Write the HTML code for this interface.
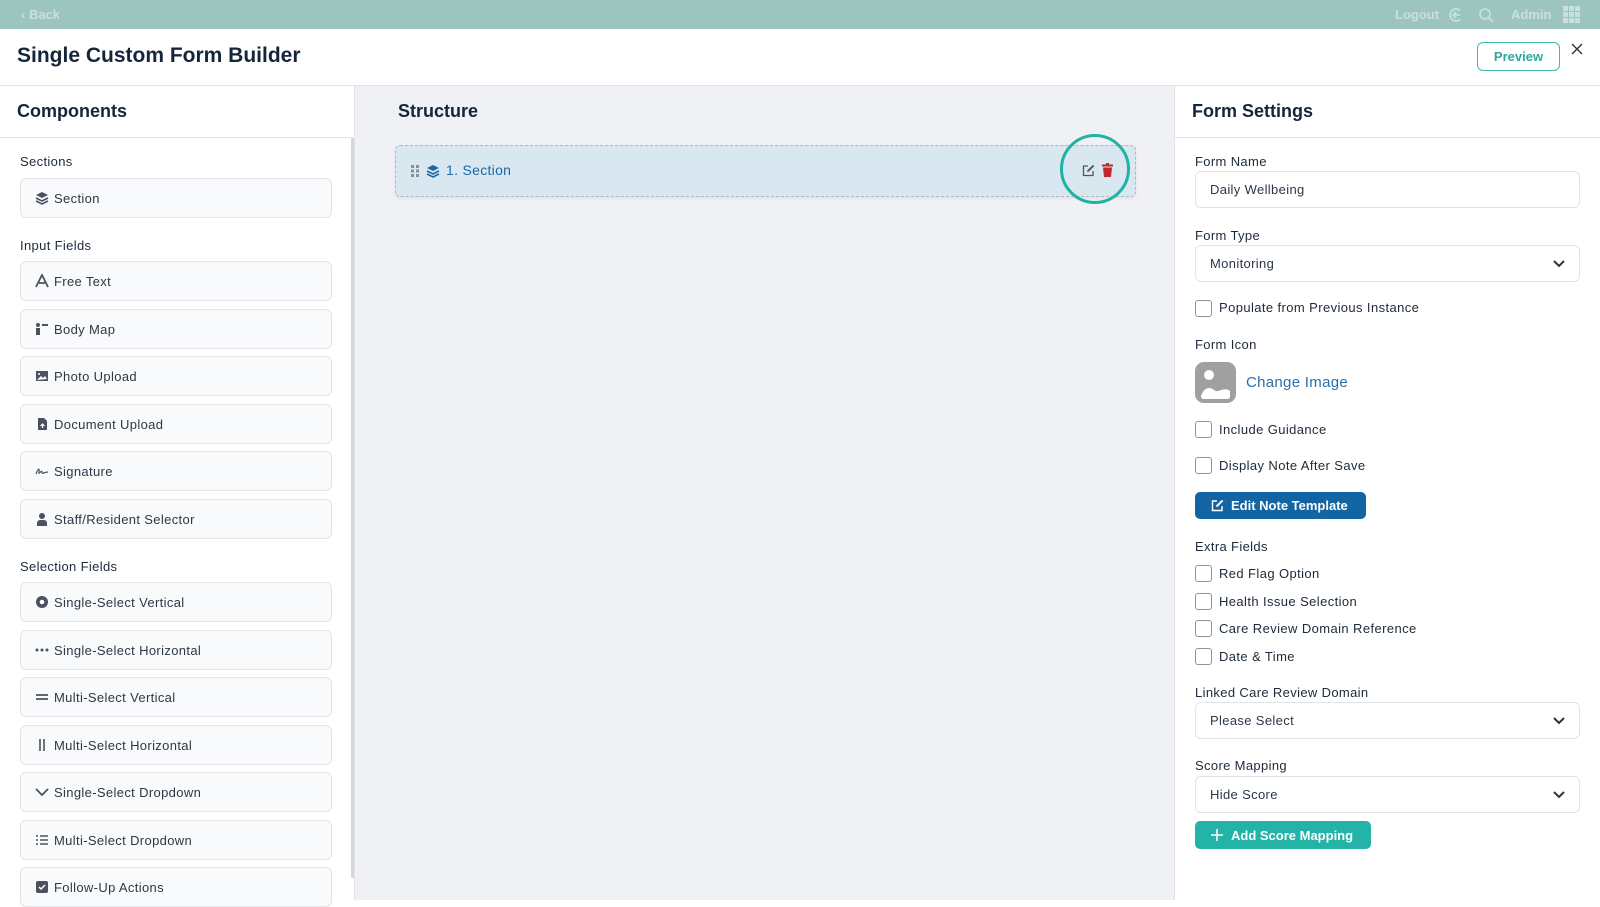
<!DOCTYPE html>
<html><head><meta charset="utf-8"><style>
*{box-sizing:border-box;margin:0;padding:0}
body{width:1600px;height:900px;overflow:hidden;font-family:"Liberation Sans",sans-serif;color:#1d2a3a;background:#fff;position:relative}
.a{position:absolute}
.top{left:0;top:0;width:1600px;height:29px;background:#9dc5c0;color:#c9e0dc;font-size:13px;font-weight:bold}
.hdr{left:0;top:29px;width:1600px;height:57px;border-bottom:1px solid #e2e4e8}
.left{left:0;top:86px;width:353px;height:814px;background:#fff}
.center{left:354px;top:86px;width:821px;height:814px;background:#f0f1f5;border-left:1px solid #e2e4e8;border-right:1px solid #e2e4e8}
.right{left:1175px;top:86px;width:425px;height:814px;background:#fff}
h2{font-size:18px;font-weight:bold;color:#15253a}
.lab{font-size:13px;color:#1d2a3a;letter-spacing:.35px}
.item{left:20px;width:312px;height:40px;border:1px solid #e3e5e8;border-radius:6px;background:#f9fafb;font-size:13px;color:#2c3846;display:flex;align-items:center;padding-left:33px;letter-spacing:.35px}
.item svg{position:absolute;left:14px;top:12px}
.inp{left:1195px;width:385px;height:37px;border:1px solid #e1e3e6;border-radius:6px;font-size:13px;color:#2c3846;padding-left:14px;display:flex;align-items:center;letter-spacing:.35px}
.chev{position:absolute;right:14px;top:13px}
.cb{left:1195px;width:17px;height:17px;border:1.5px solid #8d949c;border-radius:3px;background:#fff}
.cbl{left:1219px;font-size:13px;color:#1d2a3a;letter-spacing:.4px}
</style></head><body>
<div class="a top"><span class="a" style="left:21px;top:7px">‹ Back</span>
<span class="a" style="left:1395px;top:7px">Logout</span>
<svg class="a" style="left:1448px;top:7px" width="16" height="16" viewBox="0 0 16 16"><path d="M12 3.5A6 6 0 1 0 12 12.5" fill="none" stroke="#c9e0dc" stroke-width="1.8"/><path d="M5 8h7M8 5L5 8l3 3" fill="none" stroke="#c9e0dc" stroke-width="1.8"/></svg>
<svg class="a" style="left:1478px;top:7px" width="16" height="16" viewBox="0 0 16 16"><circle cx="7" cy="7" r="5" fill="none" stroke="#c9e0dc" stroke-width="1.6"/><path d="M11 11l4 4" stroke="#c9e0dc" stroke-width="1.6"/></svg>
<span class="a" style="left:1511px;top:7px">Admin</span>
<div class="a" style="left:1563px;top:6px;width:17px;height:17px;display:grid;grid-template-columns:repeat(3,5px);gap:1px">
<i style="background:#c9e0dc"></i><i style="background:#c9e0dc"></i><i style="background:#c9e0dc"></i><i style="background:#c9e0dc"></i><i style="background:#c9e0dc"></i><i style="background:#c9e0dc"></i><i style="background:#c9e0dc"></i><i style="background:#c9e0dc"></i><i style="background:#c9e0dc"></i></div>
</div>
<div class="a hdr">
<div class="a" style="left:17px;top:15px;font-size:21px;font-weight:bold;color:#15253a">Single Custom Form Builder</div>
<div class="a" style="left:1477px;top:13px;width:83px;height:29px;border:1px solid #3fb9ad;border-radius:6px;color:#2aa99c;font-size:13px;font-weight:bold;display:flex;align-items:center;justify-content:center">Preview</div>
<svg class="a" style="left:1571px;top:14px" width="12" height="12" viewBox="0 0 12 12"><path d="M1 1l10 10M11 1L1 11" stroke="#333" stroke-width="1.4"/></svg>
</div>

<div class="a left">
<h2 class="a" style="left:17px;top:15px">Components</h2>
<div class="a" style="left:0;top:51px;width:353px;height:1px;background:#e2e4e8"></div>
<div class="a" style="left:351px;top:52px;width:3px;height:740px;background:#d4d6da"></div>
<div class="a lab" style="left:20px;top:68px">Sections</div>
<div class="a item" style="top:92px"><svg width="14" height="14" viewBox="0 0 14 14"><path d="M7 1l6 3-6 3-6-3z" fill="#4a5260"/><path d="M1 7l6 3 6-3M1 10l6 3 6-3" fill="none" stroke="#4a5260" stroke-width="1.6"/></svg>Section</div>
<div class="a lab" style="left:20px;top:152px">Input Fields</div>
<div class="a item" style="top:175px"><svg width="14" height="14" viewBox="0 0 14 14"><path d="M1 13L7 1l6 12M4 9h6" fill="none" stroke="#4a5260" stroke-width="1.8"/></svg>Free Text</div>
<div class="a item" style="top:223px"><svg width="14" height="14" viewBox="0 0 14 14"><circle cx="3" cy="3" r="2" fill="#4a5260"/><rect x="1" y="6" width="4" height="7" fill="#4a5260"/><rect x="7" y="2" width="6" height="2" fill="#4a5260"/></svg>Body Map</div>
<div class="a item" style="top:270px"><svg width="14" height="14" viewBox="0 0 14 14"><rect x="1" y="2" width="12" height="10" fill="#4a5260"/><path d="M2 11l4-4 2 2 2-2 2 3z" fill="#fff"/><circle cx="4" cy="5" r="1" fill="#fff"/></svg>Photo Upload</div>
<div class="a item" style="top:318px"><svg width="14" height="14" viewBox="0 0 14 14"><path d="M3 1h6l3 3v9H3z" fill="#4a5260"/><path d="M7.5 11V7M5.5 9l2-2 2 2" stroke="#fff" stroke-width="1.2" fill="none"/></svg>Document Upload</div>
<div class="a item" style="top:365px"><svg width="14" height="14" viewBox="0 0 14 14"><path d="M1 10c2-6 4-6 3-2s3-3 3 0 2 0 6 0" fill="none" stroke="#4a5260" stroke-width="1.2"/></svg>Signature</div>
<div class="a item" style="top:413px"><svg width="14" height="14" viewBox="0 0 14 14"><circle cx="7" cy="4" r="3" fill="#4a5260"/><path d="M2 14v-3a3 3 0 0 1 3-3h4a3 3 0 0 1 3 3v3z" fill="#4a5260"/></svg>Staff/Resident Selector</div>
<div class="a lab" style="left:20px;top:473px">Selection Fields</div>
<div class="a item" style="top:496px"><svg width="14" height="14" viewBox="0 0 14 14"><circle cx="7" cy="7" r="6" fill="#4a5260"/><circle cx="7" cy="7" r="2.3" fill="#fff"/></svg>Single-Select Vertical</div>
<div class="a item" style="top:544px"><svg width="14" height="14" viewBox="0 0 14 14"><circle cx="2" cy="7" r="1.5" fill="#4a5260"/><circle cx="7" cy="7" r="1.5" fill="#4a5260"/><circle cx="12" cy="7" r="1.5" fill="#4a5260"/></svg>Single-Select Horizontal</div>
<div class="a item" style="top:591px"><svg width="14" height="14" viewBox="0 0 14 14"><path d="M1 5h12M1 9h12" stroke="#4a5260" stroke-width="1.8"/></svg>Multi-Select Vertical</div>
<div class="a item" style="top:639px"><svg width="14" height="14" viewBox="0 0 14 14"><path d="M5 1v12M9 1v12" stroke="#4a5260" stroke-width="1.6"/></svg>Multi-Select Horizontal</div>
<div class="a item" style="top:686px"><svg width="14" height="14" viewBox="0 0 14 14"><path d="M1 4l6 6 6-6" fill="none" stroke="#4a5260" stroke-width="1.8"/></svg>Single-Select Dropdown</div>
<div class="a item" style="top:734px"><svg width="14" height="14" viewBox="0 0 14 14"><path d="M1 3h2M1 7h2M1 11h2M5 3h8M5 7h8M5 11h8" stroke="#4a5260" stroke-width="1.6"/></svg>Multi-Select Dropdown</div>
<div class="a item" style="top:781px"><svg width="14" height="14" viewBox="0 0 14 14"><rect x="1" y="1" width="12" height="12" rx="2" fill="#4a5260"/><path d="M4 7l2 2 4-4" fill="none" stroke="#fff" stroke-width="1.5"/></svg>Follow-Up Actions</div>
</div>

<div class="a center">
<h2 class="a" style="left:43px;top:15px">Structure</h2>
<div class="a" style="left:40px;top:59px;width:741px;height:52px;background:#d9e8f0;border:1px dashed #a8b8c6;border-radius:5px;box-shadow:0 2px 3px rgba(0,0,0,.06)">
<svg class="a" style="left:14px;top:18px" width="10" height="14" viewBox="0 0 10 14"><g fill="#8a9098"><rect x="1" y="1" width="3" height="3"/><rect x="6" y="1" width="3" height="3"/><rect x="1" y="5.5" width="3" height="3"/><rect x="6" y="5.5" width="3" height="3"/><rect x="1" y="10" width="3" height="3"/><rect x="6" y="10" width="3" height="3"/></g></svg>
<svg class="a" style="left:30px;top:18px" width="14" height="14" viewBox="0 0 14 14"><path d="M7 1l6 3-6 3-6-3z" fill="#1a67a8"/><path d="M1 7l6 3 6-3M1 10l6 3 6-3" fill="none" stroke="#1a67a8" stroke-width="1.6"/></svg>
<div class="a" style="left:50px;top:16px;font-size:14px;color:#1a67a8;letter-spacing:.3px">1. Section</div>
<svg class="a" style="left:686px;top:18px" width="13" height="13" viewBox="0 0 13 13"><path d="M6 2H1.5v9.5H11V7" fill="none" stroke="#555" stroke-width="1.3"/><path d="M5 8l.5-2L11 .8l1.3 1.3L7 7.5z" fill="#555"/></svg>
<svg class="a" style="left:706px;top:17px" width="11" height="14" viewBox="0 0 11 14"><rect x="0" y="1.5" width="11" height="2" fill="#c0262d"/><rect x="4" y="0" width="3" height="2" fill="#c0262d"/><path d="M1 4.5h9l-1 9.5H2z" fill="#c0262d"/></svg>
</div>
<div class="a" style="left:705px;top:48px;width:70px;height:70px;border:3px solid #22b2a4;border-radius:50%"></div>
</div>

<div class="a right">
<h2 class="a" style="left:17px;top:15px">Form Settings</h2>
<div class="a" style="left:0;top:51px;width:425px;height:1px;background:#e2e4e8"></div>
</div>
<div class="a lab" style="left:1195px;top:154px">Form Name</div>
<div class="a inp" style="top:171px">Daily Wellbeing</div>
<div class="a lab" style="left:1195px;top:228px">Form Type</div>
<div class="a inp" style="top:245px">Monitoring<svg class="chev" width="12" height="9" viewBox="0 0 12 9"><path d="M1 2l5 5 5-5" fill="none" stroke="#333" stroke-width="2"/></svg></div>
<div class="a cb" style="top:300px"></div><div class="a cbl" style="top:300px">Populate from Previous Instance</div>
<div class="a lab" style="left:1195px;top:337px">Form Icon</div>
<div class="a" style="left:1195px;top:362px;width:41px;height:41px;border-radius:9px;background:#a0a0a0;overflow:hidden"><svg width="41" height="41" viewBox="0 0 41 41"><circle cx="14" cy="13" r="5" fill="#fff"/><path d="M6 34c3-8 8-10 13-6s9-4 16 1v5c0 2-1 3-3 3H9c-2 0-3-1-3-3z" fill="#fff"/></svg></div>
<div class="a" style="left:1246px;top:374px;font-size:15px;color:#2a6fa8;letter-spacing:.3px">Change Image</div>
<div class="a cb" style="top:421px"></div><div class="a cbl" style="top:422px">Include Guidance</div>
<div class="a cb" style="top:457px"></div><div class="a cbl" style="top:458px">Display Note After Save</div>
<div class="a" style="left:1195px;top:492px;width:171px;height:27px;background:#1264a3;border-radius:5px;color:#fff;font-size:13px;font-weight:bold;display:flex;align-items:center;padding-left:36px">Edit Note Template
<svg class="a" style="left:16px;top:7px" width="13" height="13" viewBox="0 0 13 13"><path d="M6 2H1.5v9.5H11V7" fill="none" stroke="#fff" stroke-width="1.4"/><path d="M5 8l.5-2L11 .8l1.3 1.3L7 7.5z" fill="#fff"/></svg></div>
<div class="a lab" style="left:1195px;top:539px">Extra Fields</div>
<div class="a cb" style="top:565px"></div><div class="a cbl" style="top:566px">Red Flag Option</div>
<div class="a cb" style="top:593px"></div><div class="a cbl" style="top:594px">Health Issue Selection</div>
<div class="a cb" style="top:620px"></div><div class="a cbl" style="top:621px">Care Review Domain Reference</div>
<div class="a cb" style="top:648px"></div><div class="a cbl" style="top:649px">Date &amp; Time</div>
<div class="a lab" style="left:1195px;top:685px">Linked Care Review Domain</div>
<div class="a inp" style="top:702px">Please Select<svg class="chev" width="12" height="9" viewBox="0 0 12 9"><path d="M1 2l5 5 5-5" fill="none" stroke="#333" stroke-width="2"/></svg></div>
<div class="a lab" style="left:1195px;top:758px">Score Mapping</div>
<div class="a inp" style="top:776px">Hide Score<svg class="chev" width="12" height="9" viewBox="0 0 12 9"><path d="M1 2l5 5 5-5" fill="none" stroke="#333" stroke-width="2"/></svg></div>
<div class="a" style="left:1195px;top:821px;width:176px;height:28px;background:#24b3a7;border-radius:5px;color:#fff;font-size:13px;font-weight:bold;display:flex;align-items:center;padding-left:36px">Add Score Mapping
<svg class="a" style="left:16px;top:8px" width="12" height="12" viewBox="0 0 12 12"><path d="M6 0v12M0 6h12" stroke="#fff" stroke-width="1.5"/></svg></div>
</body></html>
